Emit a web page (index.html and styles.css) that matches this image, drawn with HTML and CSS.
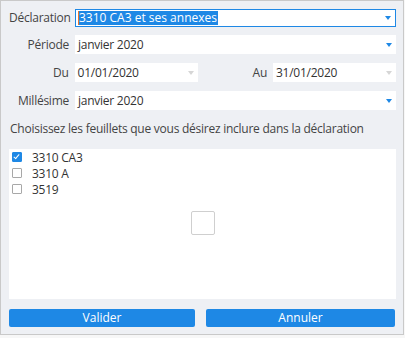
FILE: index.html
```html
<!DOCTYPE html>
<html lang="fr">
<head>
    <title>Déclaration</title>
    <link rel="stylesheet" href="styles.css">
</head>
<body>
    <div class="window">
        <div class="row first">
            <label class="label">Déclaration</label>
            <div class="combo focused">
                <span class="selected">3310 CA3 et ses annexes</span>
                <span class="arrow"></span>
            </div>
        </div>

        <div class="row">
            <label class="label">Période</label>
            <div class="combo">
                <span>janvier 2020</span>
                <span class="arrow"></span>
            </div>
        </div>

        <div class="row">
            <label class="label">Du</label>
            <div class="combo date">
                <span>01/01/2020</span>
                <span class="arrow disabled"></span>
            </div>
            <label class="label short">Au</label>
            <div class="combo date">
                <span>31/01/2020</span>
                <span class="arrow disabled"></span>
            </div>
        </div>

        <div class="row">
            <label class="label">Millésime</label>
            <div class="combo">
                <span>janvier 2020</span>
                <span class="arrow"></span>
            </div>
        </div>

        <p class="hint">Choisissez les feuillets que vous désirez inclure dans la déclaration</p>

        <div class="sheets">
            <div class="sheet"><span class="check checked"></span>3310 CA3</div>
            <div class="sheet"><span class="check"></span>3310 A</div>
            <div class="sheet"><span class="check"></span>3519</div>
            <div class="placeholder"></div>
        </div>

        <div class="buttons">
            <button class="btn ok">Valider</button>
            <button class="btn cancel">Annuler</button>
        </div>
    </div>
</body>
</html>
```

FILE: styles.css
```css
body {
    margin: 0;
    font-family: "Open Sans", "Noto Sans", sans-serif;
    font-size: 12px;
    letter-spacing: -0.25px;
    color: #333;
    background-color: #f7f7f7;
}

.window {
    box-sizing: border-box;
    width: 404px;
    height: 335px;
    border: 1px solid #c9c9c9;
    background-color: #eef0f4;
    padding: 7px 7px 7px 8px;
    display: flex;
    flex-direction: column;
}

.row {
    display: flex;
    align-items: center;
    height: 19px;
    margin-bottom: 9px;
}

.row.first {
    margin-bottom: 8px;
}

.label {
    width: 60px;
    margin-right: 6px;
    text-align: right;
    color: #444;
    white-space: nowrap;
}

.label.short {
    width: 70px;
}

.combo {
    flex: 1;
    height: 19px;
    box-sizing: border-box;
    background-color: white;
    display: flex;
    align-items: center;
    justify-content: space-between;
    padding: 0 4px 0 3px;
    white-space: nowrap;
}

.combo.date {
    flex: 0 0 123px;
}

.combo.focused {
    height: 18px;
    border: 1px solid #1e88e5;
    padding-left: 2px;
}

.selected {
    background-color: #1e88e5;
    color: white;
    line-height: 14px;
    padding-right: 1px;
    letter-spacing: 0;
    border-left: 1px solid #e8742c;
}

.arrow {
    width: 0;
    height: 0;
    border-left: 3px solid transparent;
    border-right: 3px solid transparent;
    border-top: 4px solid #1e88e5;
}

.arrow.disabled {
    border-top-color: #d6d6d6;
}

.hint {
    margin: 2px 0 13px 1px;
    line-height: 15px;
    color: #444;
}

.sheets {
    position: relative;
    flex: 1;
    background-color: white;
}

.sheet {
    display: flex;
    align-items: center;
    height: 16px;
    padding-left: 3px;
}

.check {
    box-sizing: border-box;
    width: 10px;
    height: 10px;
    border: 1px solid #a8a8a8;
    border-radius: 1px;
    margin-right: 10px;
    position: relative;
}

.check.checked {
    background-color: #1e88e5;
    border-color: #1e88e5;
}

.check.checked::after {
    content: "";
    position: absolute;
    left: 2px;
    top: 0;
    width: 2px;
    height: 5px;
    border-right: 1px solid white;
    border-bottom: 1px solid white;
    transform: rotate(40deg);
}

.placeholder {
    position: absolute;
    left: 50%;
    top: 50%;
    width: 24px;
    height: 24px;
    margin: -13px 0 0 -12px;
    box-sizing: border-box;
    border: 1px solid #cfcfcf;
    border-radius: 2px;
}

.buttons {
    display: flex;
    gap: 11px;
    margin-top: 10px;
}

.btn {
    height: 18px;
    border: none;
    border-radius: 2px;
    background-color: #1e88e5;
    color: white;
    font-family: inherit;
    font-size: 12px;
    letter-spacing: 0;
    padding: 0;
    line-height: 18px;
}

.btn.ok {
    width: 186px;
}

.btn.cancel {
    width: 189px;
}
```
